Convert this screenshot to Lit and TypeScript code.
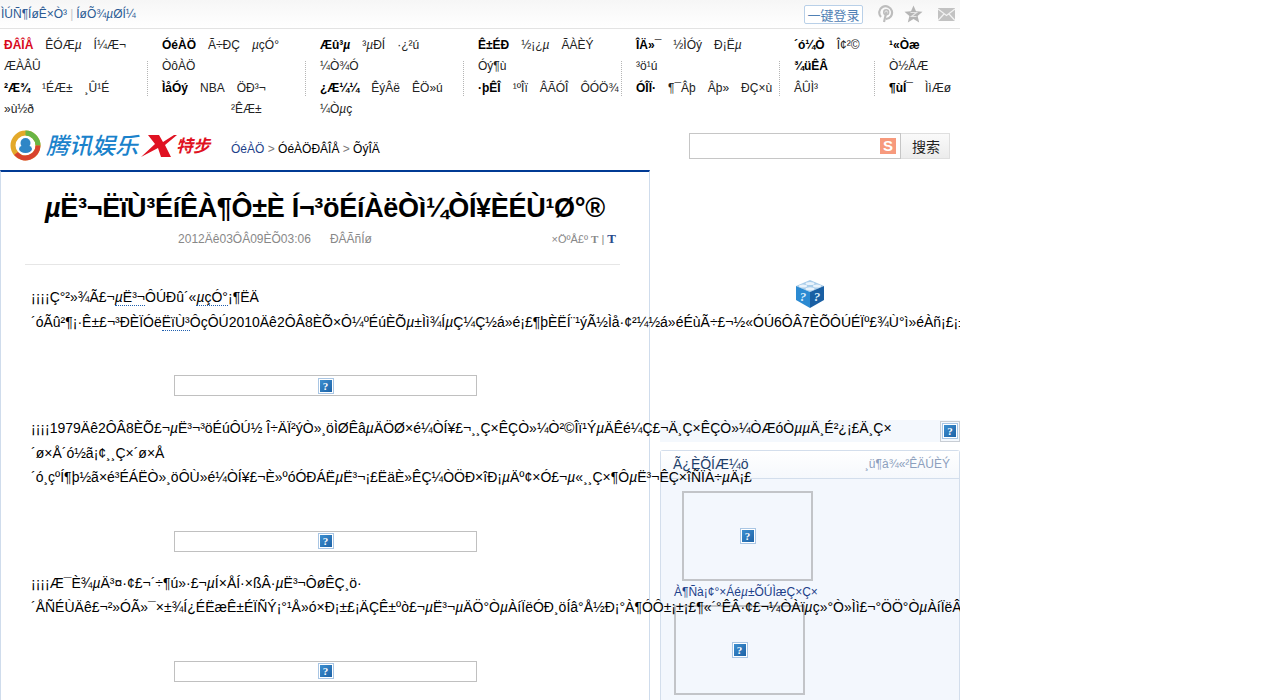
import { LitElement, html, css } from 'lit';
import { customElement } from 'lit/decorators.js';

// b: bold, r: red
type NavItem = { t: string; b?: boolean; r?: boolean };
type NavRow = { items: NavItem[]; indent?: number };

const it = (t: string, b = false, r = false): NavItem => ({ t, b, r });
const row = (items: NavItem[], indent = 0): NavRow => ({ items, indent });

// the micro sign is slanted in the reference font
const m = (s: string) =>
  s.split('µ').map((part, i) => (i === 0 ? part : html`<em>µ</em>${part}`));

const NAV: { width: number; rows: NavRow[] }[] = [
  { width: 158, rows: [
    row([it('ÐÂÎÅ', true, true), it('ÊÓÆµ'), it('Í¼Æ¬')]),
    row([it('ÆÀÂÛ')]),
    row([it('²Æ¾', true), it('¹ÉÆ±'), it('¸Û¹É')]),
    row([it('»ù½ð')]),
  ] },
  { width: 158, rows: [
    row([it('ÓéÀÖ', true), it('Ã÷ÐÇ'), it('µçÓ°')]),
    row([it('ÒôÀÖ')]),
    row([it('ÌåÓý', true), it('NBA'), it('ÖÐ³¬')]),
    row([it('²ÊÆ±')], 69),
  ] },
  { width: 158, rows: [
    row([it('Æû³µ', true), it('³µÐÍ'), it('·¿²ú')]),
    row([it('¼Ò¾Ó')]),
    row([it('¿Æ¼¼', true), it('ÊýÂë'), it('ÊÖ»ú')]),
    row([it('¼Òµç')]),
  ] },
  { width: 158, rows: [
    row([it('Ê±ÉÐ', true), it('½¡¿µ'), it('ÃÀÈÝ')]),
    row([it('Óý¶ù')]),
    row([it('·þÊÎ', true), it('¹ºÎï'), it('ÂÃÓÎ'), it('ÔÓÖ¾')]),
  ] },
  { width: 158, rows: [
    row([it('ÎÄ»¯', true), it('½ÌÓý'), it('Ð¡Ëµ')]),
    row([it('³ö¹ú')]),
    row([it('ÓÎÏ·', true), it('¶¯Âþ'), it('Âþ»'), it('ÐÇ×ù')]),
  ] },
  { width: 95, rows: [
    row([it('´ó¼Ò', true), it('Î¢²©')]),
    row([it('¾üÊÂ', true)]),
    row([it('ÂÛÌ³')]),
  ] },
  { width: 71, rows: [
    row([it('¹«Òæ', true)]),
    row([it('Ò½ÅÆ')]),
    row([it('¶ùÍ¯', true), it('ÌìÆø')]),
  ] },
];

@customElement('app-root')
export class AppRoot extends LitElement {
  static styles = css`
    :host {
      display: block;
      width: 960px;
      height: 700px;
      overflow: hidden;
      background: #fff;
      font-family: 'Liberation Sans', Arial, sans-serif;
      font-size: 12px;
      color: #000;
    }
    em { font-style: italic; }
    .topbar {
      height: 28px;
      border-bottom: 1px solid #e3e3e3;
      background: linear-gradient(#f6f6f6, #ffffff);
      display: flex;
      align-items: center;
      padding-left: 1px;
      color: #2a5a94;
      white-space: nowrap;
    }
    .topbar .sep { color: #c8c8c8; margin: 0 3px; }
    .topbar .right { margin-left: auto; display: flex; align-items: center; }
    .login {
      width: 57px;
      height: 17px;
      border: 1px solid #b9d0e8;
      border-radius: 2px;
      font-family: 'Noto Sans CJK SC', sans-serif;
      font-size: 13px;
      line-height: 17px;
      text-align: center;
      color: #4f80b4;
      background: #fff;
      margin-right: 15px;
    }
    .ticon { display: block; margin-right: 10px; }
    .ticon:last-child { margin-right: 5px; }

    .nav { display: flex; padding: 6px 0 0 4px; height: 86px; }
    .col { position: relative; flex: none; }
    .col .divider {
      position: absolute;
      top: 26px;
      left: -15px;
      height: 35px;
      border-left: 1px dotted #b5b5b5;
    }
    .nav-row { display: flex; gap: 12px; height: 21.3px; line-height: 21px; white-space: nowrap; color: #222; }
    .nav-row .b { font-weight: bold; color: #000; }
    .nav-row .r { color: #d8091c; }

    .head { display: flex; align-items: center; height: 49px; padding-left: 10px; }
    .logo { display: flex; align-items: center; flex: none; width: 221px; }
    .brand {
      font-family: 'Noto Sans CJK SC', sans-serif;
      font-size: 23px;
      font-weight: 500;
      font-style: italic;
      color: #1a82cb;
      line-height: 32px;
      margin: 0 2px 3px 5px;
      white-space: nowrap;
    }
    .brand2 {
      font-family: 'Noto Sans CJK SC', sans-serif;
      font-size: 17px;
      font-weight: bold;
      font-style: italic;
      color: #e01222;
      white-space: nowrap;
      margin: 0 0 2px -8px;
    }
    .crumb { color: #000; white-space: nowrap; margin-top: 6px; }
    .crumb .home { color: #1d3f8a; }
    .crumb .gt { color: #777; }
    .search { margin-left: auto; margin-right: 10px; display: flex; }
    .search .field {
      width: 189px;
      height: 24px;
      border: 1px solid #c6c6c6;
      display: flex;
      align-items: center;
      justify-content: flex-end;
      padding-right: 4px;
      padding-left: 17px;
      box-sizing: content-box;
    }
    .sogou {
      width: 16px;
      height: 16px;
      background: #f79a7d;
      color: #fff;
      font-weight: bold;
      font-size: 15px;
      line-height: 16px;
      text-align: center;
    }
    .search .btn {
      width: 46px;
      height: 24px;
      border: 1px solid #dfdfdf;
      border-left: 0;
      background: linear-gradient(#fafafa, #ececec);
      font-family: 'Noto Sans CJK SC', sans-serif;
      font-size: 14px;
      line-height: 25px;
      text-align: center;
      color: #222;
      padding-left: 2px;
    }

    .body { display: flex; align-items: flex-start; }
    .main {
      position: relative;
      z-index: 1;
      flex: none;
      box-sizing: border-box;
      width: 650px;
      height: 540px;
      border-top: 2px solid #003a94;
      border-left: 1px solid #cfdcec;
      border-right: 1px solid #cfdcec;
    }
    h1 {
      margin: 0;
      padding-top: 19px;
      height: 34px;
      line-height: 34px;
      font-size: 27px;
      font-weight: bold;
      text-align: center;
      white-space: nowrap;
      letter-spacing: -0.3px;
    }
    .meta {
      position: relative;
      display: flex;
      justify-content: center;
      gap: 19px;
      margin-top: 6px;
      height: 16px;
      line-height: 16px;
      color: #888;
      padding-right: 100px;
    }
    .fontsize {
      position: absolute;
      right: 33px;
      top: 0;
      font-size: 11px;
      white-space: nowrap;
    }
    .fontsize .t { font-family: 'Liberation Serif', serif; font-weight: bold; }
    .fontsize .lg { font-size: 13px; color: #2a4a8c; }
    .rule { height: 1px; background: #e6e6e6; margin: 17px 29px 0 24px; }
    .article { padding: 20px 0 0 30px; font-size: 14px; white-space: nowrap; }
    .article p { margin: 0; line-height: 24.5px; }
    .dot { border-bottom: 1px dotted #2060b0; }
    .ph {
      box-sizing: border-box;
      width: 303px;
      height: 21px;
      margin: 41px 0 20px 143px;
      border: 1px solid #c0c0c0;
      display: flex;
      align-items: center;
      justify-content: center;
    }
    .ph.second { margin-bottom: 19px; }
    .broken {
      box-sizing: border-box;
      flex: none;
      width: 16px;
      height: 16px;
      border: 1px solid #a9c6e4;
      padding: 1px;
      background: #fff;
      display: block;
    }
    .broken i {
      display: block;
      width: 12px;
      height: 12px;
      background: linear-gradient(135deg, #3d8fd0, #1d62a6);
      color: #fff;
      font: bold 11px/12px 'Liberation Serif', serif;
      text-align: center;
    }

    .side { flex: none; width: 300px; margin-left: 10px; padding-top: 109px; box-sizing: border-box; }
    .cube { display: block; margin-left: 135px; }
    .strip {
      height: 22px;
      margin-top: 111px;
      background: #f4f8fd;
      display: flex;
      justify-content: flex-end;
      align-items: center;
    }
    .strip .edge {
      box-sizing: border-box;
      width: 20px;
      height: 21px;
      border: 1px solid #c8cdd4;
      display: flex;
      align-items: center;
      justify-content: center;
    }
    .panel {
      margin-top: 8px;
      height: 300px;
      border: 1px solid #d3deec;
      border-bottom: 0;
      border-radius: 3px 3px 0 0;
      background: #f3f7fd;
    }
    .panel-head {
      box-sizing: border-box;
      height: 28px;
      display: flex;
      justify-content: space-between;
      align-items: center;
      padding: 0 9px 2px 12px;
      border-bottom: 1px solid #d3deec;
      background: linear-gradient(#ffffff, #f5f8fc);
    }
    .panel-head .ttl { font-size: 14px; color: #1d3f6c; }
    .panel-head .more { color: #8c9fbd; }
    .shot {
      box-sizing: border-box;
      width: 131px;
      height: 90px;
      border: 2px solid #c2c4c8;
      display: flex;
      align-items: center;
      justify-content: center;
    }
    .shot.a { margin: 12px 0 0 21px; }
    .shot.b { margin: 5px 0 0 13px; }
    .cap { margin: 3px 0 0 13px; color: #1d3f8a; height: 16px; line-height: 16px; white-space: nowrap; }
  `;

  private broken() {
    return html`<span class="broken"><i>?</i></span>`;
  }

  private renderNav() {
    return NAV.map(
      (c, i) => html`
        <div class="col" style="width:${c.width}px">
          ${i > 0 ? html`<div class="divider"></div>` : ''}
          ${c.rows.map(
            r => html`
              <div class="nav-row" style="padding-left:${r.indent}px">
                ${r.items.map(
                  n => html`<span class="${n.b ? 'b' : ''} ${n.r ? 'r' : ''}">${m(n.t)}</span>`
                )}
              </div>
            `
          )}
        </div>
      `
    );
  }

  render() {
    return html`
      <div class="topbar">
        <span>ÌÚÑ¶ÍøÊ×Ò³</span><span class="sep">|</span><span>${m('ÍøÕ¾µØÍ¼')}</span>
        <div class="right">
          <div class="login">一键登录</div>
          <svg class="ticon" width="16" height="18" viewBox="0 0 16 18" fill="none" stroke="#bdbdbd" stroke-width="2.2">
            <path d="M3 12 A6.4 6.4 0 1 1 8 14" />
            <path d="M6 17 L8.5 6.5" />
            <circle cx="8.2" cy="7.2" r="2.4" stroke-width="1.6" />
          </svg>
          <svg class="ticon" width="19" height="18" viewBox="0 0 19 18" style="margin-right:15px">
            <path d="M9.5 0.5 L12 6.3 L18.5 6.8 L13.6 11 L15.2 17.5 L9.5 14 L3.8 17.5 L5.4 11 L0.5 6.8 L7 6.3 Z" fill="#b5b5b5" />
            <path d="M6.5 7.5 H12.5 L7.5 11.5 H12.5" fill="none" stroke="#e6e6e6" stroke-width="1.2" />
          </svg>
          <svg class="ticon" width="17" height="13" viewBox="0 0 17 13">
            <rect width="17" height="13" fill="#c2c2c2" />
            <path d="M0 1 L8.5 7.5 L17 1 M0 12.5 L6 6 M17 12.5 L11 6" fill="none" stroke="#f2f2f2" stroke-width="1.2" />
          </svg>
        </div>
      </div>

      <div class="nav">${this.renderNav()}</div>

      <div class="head">
        <div class="logo">
          <svg width="31" height="31" viewBox="0 0 31 31">
            <circle cx="15.5" cy="15.5" r="12.5" fill="#fff" stroke="#e3a92a" stroke-width="5" />
            <path d="M15.5 3 A12.5 12.5 0 0 1 28 15.5" fill="none" stroke="#69b545" stroke-width="5" />
            <path d="M28 15.5 A12.5 12.5 0 0 1 6 23.5" fill="none" stroke="#d8432e" stroke-width="5" />
            <circle cx="15.5" cy="13" r="5" fill="#2f86c6" />
            <ellipse cx="15.5" cy="19" rx="6.5" ry="4" fill="#2f86c6" />
          </svg>
          <span class="brand">腾讯娱乐</span>
          <svg width="44" height="24" viewBox="0 0 44 24">
            <path d="M8 1 H19 L23 8 L34 1 H37 L25 11 L31 23 H21 L18 14 L1 23 L15 10 Z" fill="#e01222" />
          </svg>
          <span class="brand2">特步</span>
        </div>
        <div class="crumb">
          <span class="home">ÓéÀÖ</span> <span class="gt">&gt;</span> ÓéÀÖÐÂÎÅ <span class="gt">&gt;</span> ÕýÎÄ
        </div>
        <div class="search">
          <div class="field"><div class="sogou">S</div></div>
          <div class="btn">搜索</div>
        </div>
      </div>

      <div class="body">
        <div class="main">
          <h1>${m('µË³¬ËïÙ³ÉíÊÀ¶Ô±È Í¬³öÉíÀëÒì¼ÒÍ¥ÈÉÙ¹Ø°®')}</h1>
          <div class="meta">
            <span>2012Äê03ÔÂ09ÈÕ03:06</span><span>ÐÂÃñÍø</span>
            <span class="fontsize">×ÖºÅ£º <span class="t">T</span> | <span class="t lg">T</span></span>
          </div>
          <div class="rule"></div>
          <div class="article">
            <p>¡¡¡¡Ç°²»¾Ã£¬<span class="dot">${m('µË³¬')}</span>ÔÚÐû´«<span class="dot">${m('µçÓ°')}</span>¡¶ËÄ</p>
            <p>´óÃû²¶¡·Ê±£¬³ÐÈÏÓë<span class="dot">ËïÙ³</span>ÔçÔÚ2010Äê2ÔÂ8ÈÕ×Ô¼ºÉúÈÕ${m('µ±Ìì¾ÍµÇ¼Ç½á»é¡£¶þÈËÍ¨¹ýÃ½Ìå·¢²¼½á»éÉùÃ÷£¬½«ÓÚ6ÔÂ7ÈÕÔÚÉÏº£¾Ù°ì»éÀñ¡£¡±')}</p>
            <div class="ph">${this.broken()}</div>
            <p>${m('¡¡¡¡1979Äê2ÔÂ8ÈÕ£¬µË³¬³öÉúÔÚ½  Î÷ÄÏ²ýÒ»¸öÌØÊâµÄÖØ×é¼ÒÍ¥£¬¸¸Ç×ÊÇÒ»¼Ò²©Îï¹ÝµÄÊé¼Ç£¬Ä¸Ç×ÊÇÒ»¼ÒÆóÒµµÄ¸É²¿¡£Ä¸Ç×')}</p>
            <p>´ø×Å´ó½ã¡¢¸¸Ç×´ø×Å</p>
            <p>${m('´ó¸çºÍ¶þ½ã×é³ÉÁËÒ»¸öÔÙ»é¼ÒÍ¥£¬È»ºóÓÐÁËµË³¬¡£ËäÈ»ÊÇ¼ÒÖÐ×îÐ¡µÄº¢×Ó£¬µ«¸¸Ç×¶ÔµË³¬ÊÇ×îÑÏÀ÷µÄ¡£')}</p>
            <div class="ph second">${this.broken()}</div>
            <p>${m('¡¡¡¡Æ¯È¾µÄ³¤·¢£¬´÷¶ú»·£¬µÍ×ÅÍ·×ßÂ·µË³¬ÔøÊÇ¸ö·')}</p>
            <p>${m('´ÅÑÉÙÄê£¬²»ÓÃ»¯×±¾Í¿ÉËæÊ±ÉÏÑÝ¡°¹Å»ó×Ð¡±£¡ÄÇÊ±ºò£¬µË³¬µÄÖ°ÒµÀíÏëÓÐ¸öÍâ°Å½Ð¡°À¶ÓÔ±¡±¡£¶«´°ÊÂ·¢£¬¼ÒÀïµç»°Ò»Ìì£¬°ÖÖ°ÒµÀíÏëÂ·')}</p>
            <div class="ph">${this.broken()}</div>
          </div>
        </div>

        <div class="side">
          <svg class="cube" width="30" height="30" viewBox="0 0 30 30">
            <path d="M15 1 L29 7 L15 13 L1 7 Z" fill="#a9cdea" />
            <ellipse cx="15" cy="4.5" rx="4.5" ry="1.6" fill="#eaf3fb" />
            <ellipse cx="8" cy="7" rx="4" ry="1.5" fill="#eaf3fb" />
            <ellipse cx="22" cy="7" rx="4" ry="1.5" fill="#eaf3fb" />
            <ellipse cx="15" cy="9.8" rx="4.5" ry="1.6" fill="#eaf3fb" />
            <path d="M1 7 L15 13 V29 L1 21 Z" fill="#2b8ad2" />
            <path d="M29 7 L15 13 V29 L29 21 Z" fill="#1a5fa3" />
            <text x="8" y="22" fill="#d8ecfa" font-size="13" font-weight="bold" font-style="italic" text-anchor="middle" font-family="Liberation Serif">?</text>
            <text x="22" y="22" fill="#d8ecfa" font-size="13" font-weight="bold" font-style="italic" text-anchor="middle" font-family="Liberation Serif">?</text>
          </svg>
          <div class="strip"><div class="edge">${this.broken()}</div></div>
          <div class="panel">
            <div class="panel-head">
              <span class="ttl">Ã¿ÈÕÍÆ¼ö</span>
              <span class="more">¸ü¶à¾«²ÊÄÚÈÝ</span>
            </div>
            <div class="shot a">${this.broken()}</div>
            <div class="cap">${m('À¶Ñà¡¢°×Áéµ±ÕÚÌæÇ×Ç×')}</div>
            <div class="shot b">${this.broken()}</div>
          </div>
        </div>
      </div>
    `;
  }
}
